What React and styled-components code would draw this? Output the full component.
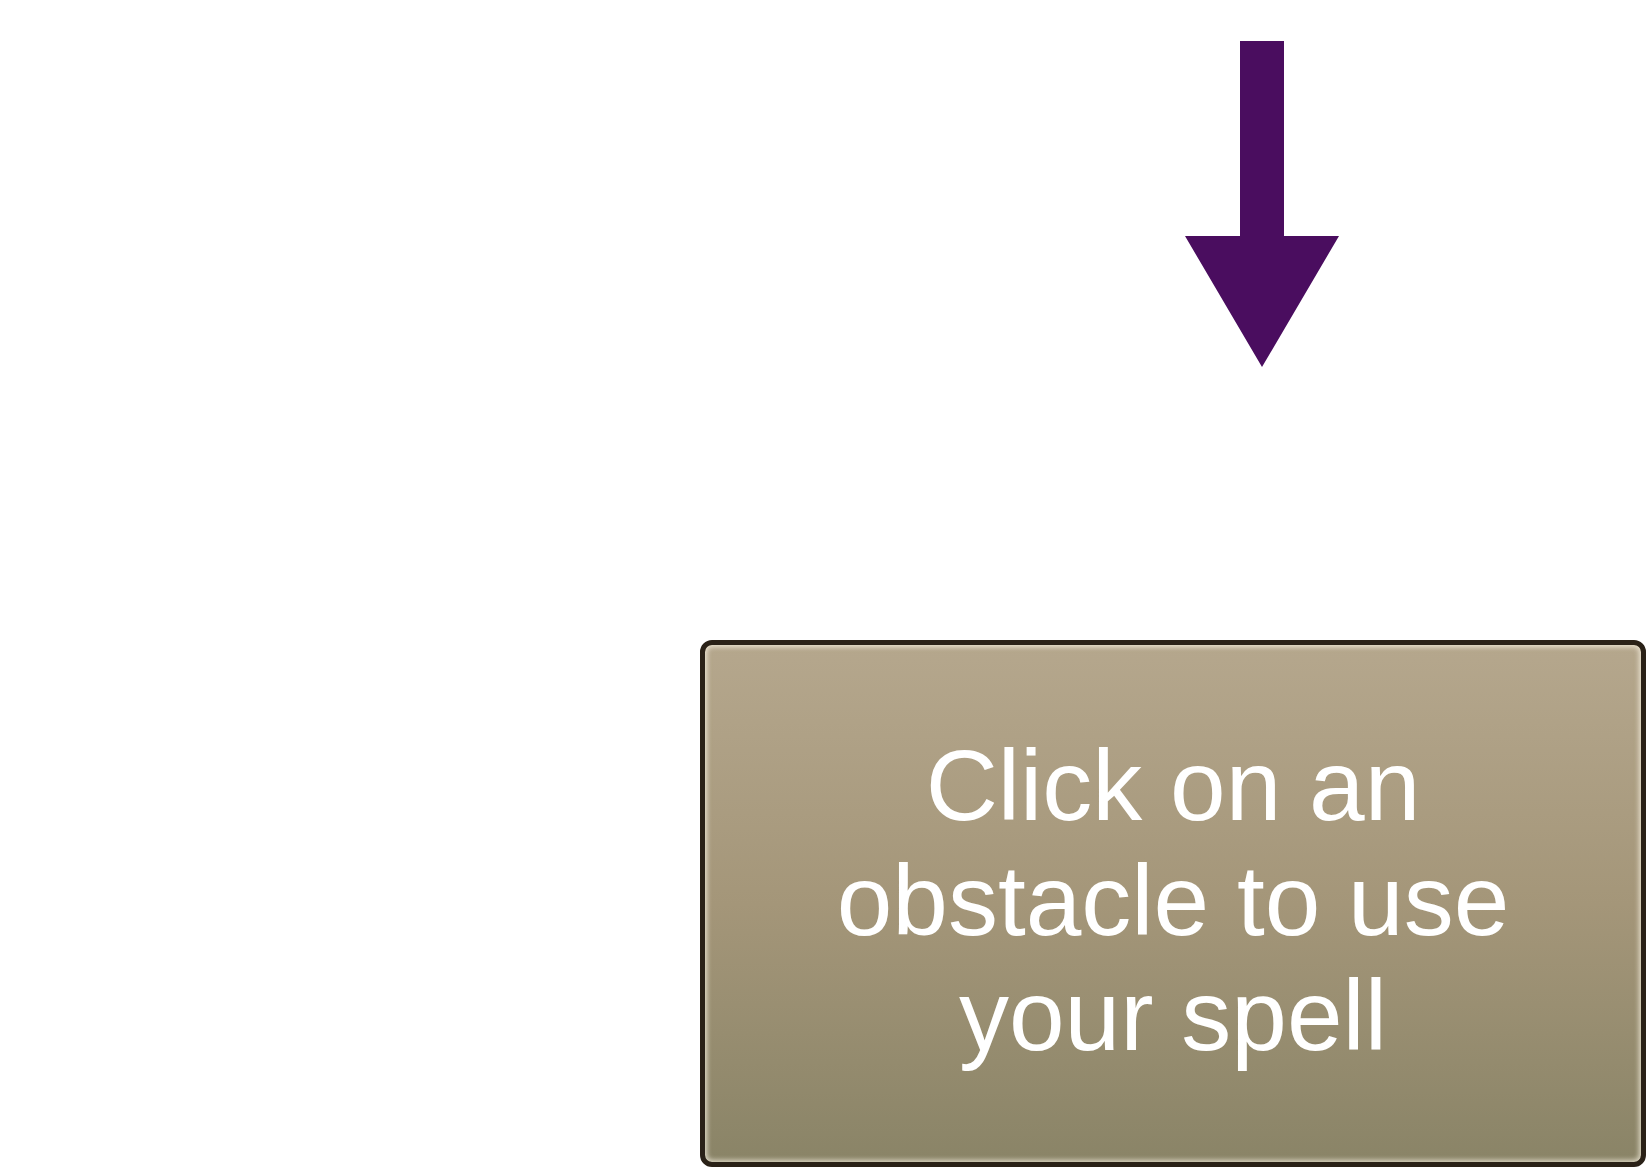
import React from 'react'
import styled, { createGlobalStyle } from 'styled-components'

const GlobalStyle = createGlobalStyle`
  html, body {
    margin: 0;
    padding: 0;
    background: #ffffff;
    overflow: hidden;
  }
`

const Page = styled.div`
  width: 1649px;
  height: 1169px;
  box-sizing: border-box;
  display: flex;
  flex-direction: column;
  align-items: flex-end;
  padding: 41px 3px 0 0;
`

const Arrow = styled.svg`
  display: block;
  width: 154px;
  height: 326px;
  margin-right: 307px;
`

const HintBox = styled.div`
  box-sizing: border-box;
  width: 946px;
  height: 527px;
  margin-top: 273px;
  border: 5px solid #2a2117;
  border-radius: 12px;
  background: linear-gradient(to bottom, #b5a78d 0%, #a49679 50%, #8a8467 100%);
  box-shadow: inset 0 0 5px 2px rgba(255, 250, 235, 0.7);
  display: flex;
  align-items: center;
  justify-content: center;
  padding: 0 90px 6px;
`

const HintText = styled.p`
  margin: 0;
  color: #ffffff;
  font-family: "Liberation Sans", Arial, sans-serif;
  font-size: 100px;
  line-height: 115px;
  text-align: center;
`

export default function App() {
  return (
    <>
      <GlobalStyle />
      <Page>
        <Arrow viewBox="0 0 154 326">
          <path d="M55 0 H99 V195 H154 L77 326 L0 195 H55 Z" fill="#4a0d5f" />
        </Arrow>
        <HintBox>
          <HintText>Click on an obstacle to use your spell</HintText>
        </HintBox>
      </Page>
    </>
  )
}
